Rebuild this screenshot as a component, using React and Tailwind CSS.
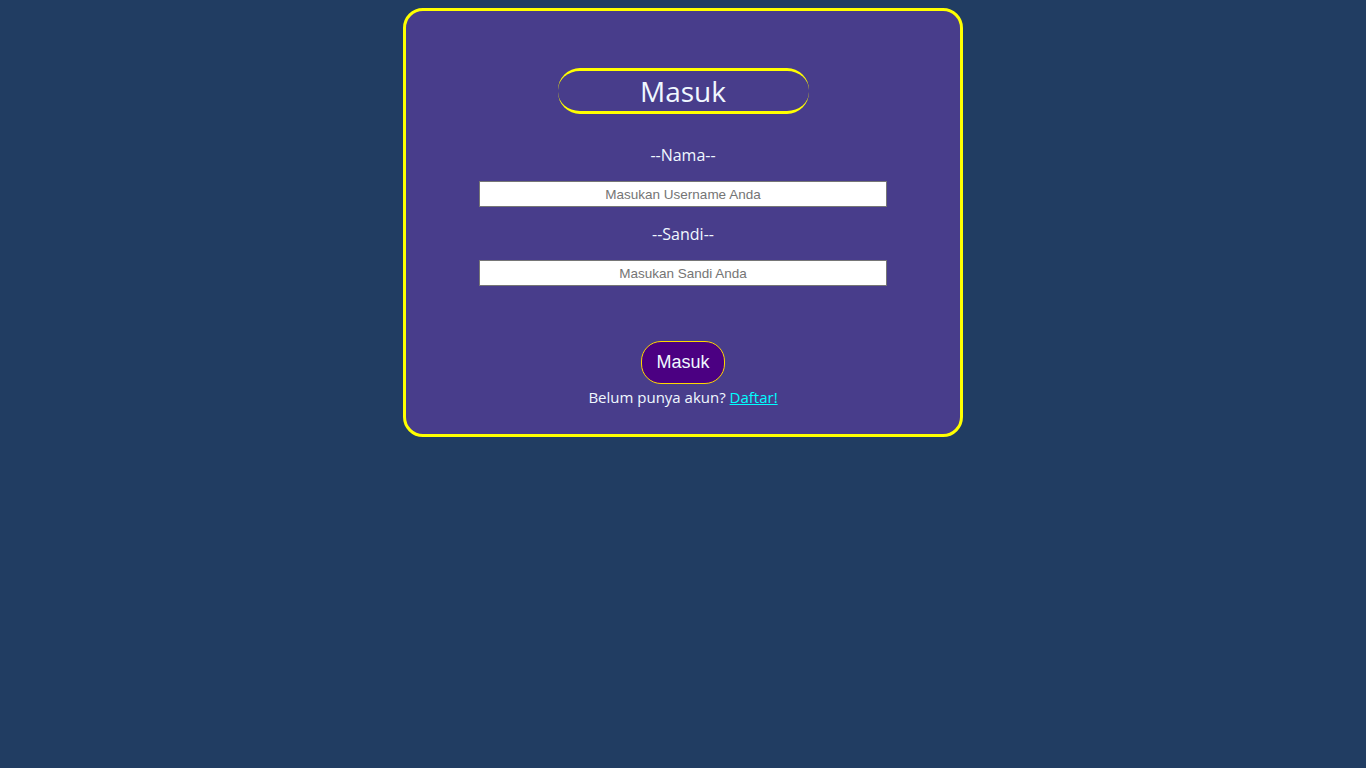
export default function App() {
  return (
    <div className="min-h-[768px] w-full bg-[#213d62] pt-2">
      <div className="mx-auto flex w-[560px] flex-col items-center rounded-[20px] border-[3px] border-[#ffff00] bg-[#483d8b] pb-[25px] pt-[57px] font-['Open_Sans',sans-serif] text-[#f0f8ff]">
        <div className="flex h-[46px] w-[251px] items-center justify-center rounded-[22px] border-y-[3px] border-[#ffff00] text-[28px] leading-none">
          Masuk
        </div>
        <div className="mt-[29px] text-[16px] leading-[24px]">--Nama--</div>
        <input
          type="text"
          placeholder="Masukan Username Anda"
          className="mt-[14px] h-[26px] w-[408px] border border-[#767676] bg-white text-center font-['Liberation_Sans',sans-serif] text-[13.5px] text-black placeholder:text-[#757575] outline-none"
        />
        <div className="mt-[15px] text-[16px] leading-[24px]">--Sandi--</div>
        <input
          type="password"
          placeholder="Masukan Sandi Anda"
          className="mt-[14px] h-[26px] w-[408px] border border-[#767676] bg-white text-center font-['Liberation_Sans',sans-serif] text-[13.5px] text-black placeholder:text-[#757575] outline-none"
        />
        <button className="mt-[55px] h-[43px] w-[84px] rounded-[20px] border border-[#ffd700] bg-[#4b0082] font-['Liberation_Sans',sans-serif] text-[18px] text-[#f0f8ff]">
          Masuk
        </button>
        <div className="mt-px text-[15px] leading-[24px]">
          Belum punya akun?{" "}
          <a href="#" className="text-[#00ffff] underline">
            Daftar!
          </a>
        </div>
      </div>
    </div>
  );
}
